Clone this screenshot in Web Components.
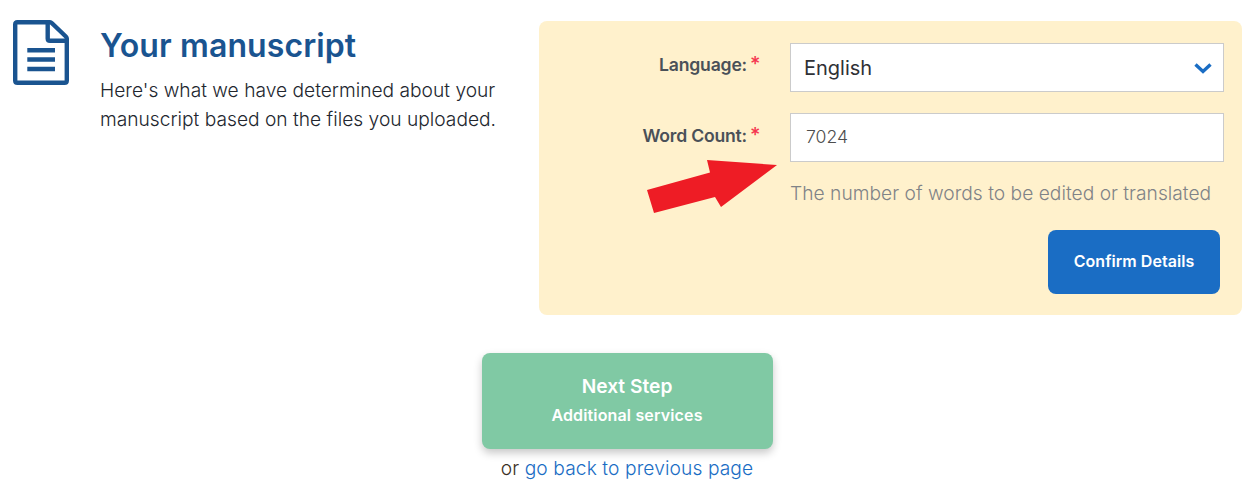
<!DOCTYPE html>
<html lang="en">
<head>
<meta charset="utf-8">
<title>Your manuscript</title>
<style>
  html, body { margin: 0; background: #fff; }
  body { font-family: Inter, "Liberation Sans", sans-serif; color: #333; }
</style>
</head>
<body>
<manuscript-page></manuscript-page>

<script>
class ManuscriptIntro extends HTMLElement {
  constructor() {
    super();
    this.shadowDOM = this.attachShadow({ mode: "open" });
    this.shadowDOM.innerHTML = `
      <style>
        :host { display: flex; width: 539px; box-sizing: border-box; padding: 20px 0 0 13px; }
        svg { display: block; width: 56px; height: 65px; flex: none; }
        .text { margin-left: 31px; }
        h2 { margin: 5px 0 0; font-size: 32px; line-height: 42px; font-weight: 600; color: #1a5490; letter-spacing: 0.1px; }
        p { margin: 9px 0 0; font-size: 19.2px; line-height: 29px; font-weight: 300; color: #22262e; }
      </style>
      <svg viewBox="0 0 56 65" fill="none" stroke="#1a5490" stroke-width="4.4" stroke-linejoin="round">
        <path d="M4.500 2.200H37Q38 2.200 39 3.200L52.800 16.500Q53.800 17.500 53.800 18.500V60.500Q53.800 62.800 51.500 62.800H4.500Q2.200 62.800 2.200 60.500V4.500Q2.200 2.200 4.500 2.200Z"/>
        <path d="M34.700 2.200V18.500Q34.700 20.800 37 20.800H53.800"/>
        <path d="M14.300 30.300H42M14.300 39.500H42M14.300 49H42"/>
      </svg>
      <div class="text">
        <h2><slot name="title"></slot></h2>
        <p><slot></slot></p>
      </div>
    `;
  }
}

class FormRow extends HTMLElement {
  constructor() {
    super();
    this.shadowDOM = this.attachShadow({ mode: "open" });
    this.shadowDOM.innerHTML = `
      <style>
        :host { display: grid; grid-template-columns: 220px 434px; column-gap: 31px; }
        .label { display: flex; justify-content: flex-end; align-items: baseline; padding-top: var(--label-top, 11px);
          font-size: 17.6px; line-height: 20px; font-weight: 600; color: #4a5058; letter-spacing: -0.2px; }
        .star { color: #f5364f; font-size: 20px; line-height: 20px; font-weight: 500; margin-left: 3px; width: 9px; }
      </style>
      <div class="label"><span>${this.getAttribute("label")}:</span><span class="star">*</span></div>
      <div><slot></slot></div>
    `;
  }
}

class FieldBox extends HTMLElement {
  constructor() {
    super();
    this.shadowDOM = this.attachShadow({ mode: "open" });
    const isSelect = this.hasAttribute("select");
    this.shadowDOM.innerHTML = `
      <style>
        :host { display: flex; align-items: center; justify-content: space-between; box-sizing: border-box;
          height: 49px; background: #fff; border: 1px solid #cbcbcb; }
        :host([select]) { padding: 0 11px 0 13px; font-size: 20px; font-weight: 400; color: #2f3136; }
        :host(:not([select])) { padding: 0 15px 2px; font-size: 17.6px; font-weight: 300; color: #4d4d4d; }
        svg { display: block; width: 18px; height: 12px; }
      </style>
      <slot></slot>
      ${isSelect ? `<svg viewBox="0 0 18 12"><path d="M1.500 2.500L9 9.500L16.500 2.500" fill="none" stroke="#1a6dc4" stroke-width="3.400"/></svg>` : ""}
    `;
  }
}

class DetailsPanel extends HTMLElement {
  constructor() {
    super();
    this.shadowDOM = this.attachShadow({ mode: "open" });
    this.shadowDOM.innerHTML = `
      <style>
        :host { display: block; position: relative; box-sizing: border-box; width: 703px; height: 294px;
          padding: 22px 18px 0 0; background: #fff1cc; border-radius: 8px; }
        form-row + form-row { margin-top: 21px; --label-top: 12px; }
        .help { margin: 20px 0 0 251px; font-size: 19.2px; line-height: 22px; font-weight: 300; color: #7f8387; white-space: nowrap; letter-spacing: 0.02px; }
        .actions { display: flex; justify-content: flex-end; margin: 26px 4px 0 0; }
        .confirm { display: flex; align-items: center; justify-content: center; width: 172px; height: 64px; padding-bottom: 2px; box-sizing: border-box;
          background: #1a6dc4; border-radius: 8px; color: #fff; font-size: 16px; font-weight: 600; letter-spacing: 0.05px; }
        .arrow { position: absolute; left: 108px; top: 139px; width: 131px; height: 54px; }
      </style>
      <form-row label="Language"><field-box select>English</field-box></form-row>
      <form-row label="Word Count"><field-box>7024</field-box></form-row>
      <div class="help">The number of words to be edited or translated</div>
      <div class="actions"><div class="confirm">Confirm Details</div></div>
      <svg class="arrow" viewBox="0 0 131 54">
        <path d="M0 30L63 12.500L60 0L130 5L74 47L68 37L7 53Z" fill="#ee1c25"/>
      </svg>
    `;
  }
}

class NextStep extends HTMLElement {
  constructor() {
    super();
    this.shadowDOM = this.attachShadow({ mode: "open" });
    this.shadowDOM.innerHTML = `
      <style>
        :host { display: flex; flex-direction: column; align-items: center; margin-top: 38px; padding-right: 4px; }
        .btn { display: flex; flex-direction: column; align-items: center; justify-content: center; width: 291px; height: 96px; box-sizing: border-box; padding-bottom: 2px;
          background: #80c9a4; border-radius: 8px; color: #fff; box-shadow: 0 4px 8px rgba(0,0,0,.22); }
        .main { font-size: 19.2px; line-height: 26px; font-weight: 600; margin-top: -1px; }
        .sub { font-size: 16px; line-height: 24px; font-weight: 600; margin-top: 4px; letter-spacing: 0.15px; }
        .back { margin-top: 6px; font-size: 19.2px; line-height: 26px; font-weight: 300; color: #3a2f25; letter-spacing: 0.1px; }
        .back a { color: #1a6dc4; text-decoration: none; }
      </style>
      <div class="btn">
        <div class="main">Next Step</div>
        <div class="sub">Additional services</div>
      </div>
      <div class="back">or <a href="#">go back to previous page</a></div>
    `;
  }
}

class ManuscriptPage extends HTMLElement {
  constructor() {
    super();
    this.shadowDOM = this.attachShadow({ mode: "open" });
    this.shadowDOM.innerHTML = `
      <style>
        :host { display: block; padding-top: 21px; }
        .top { display: flex; align-items: flex-start; }
        manuscript-intro { margin-top: -21px; }
      </style>
      <div class="top">
        <manuscript-intro>
          <span slot="title">Your manuscript</span>
          Here's what we have determined about your manuscript based on the files you uploaded.
        </manuscript-intro>
        <details-panel></details-panel>
      </div>
      <next-step></next-step>
    `;
  }
}

customElements.define("manuscript-intro", ManuscriptIntro);
customElements.define("form-row", FormRow);
customElements.define("field-box", FieldBox);
customElements.define("details-panel", DetailsPanel);
customElements.define("next-step", NextStep);
customElements.define("manuscript-page", ManuscriptPage);
</script>
</body>
</html>
